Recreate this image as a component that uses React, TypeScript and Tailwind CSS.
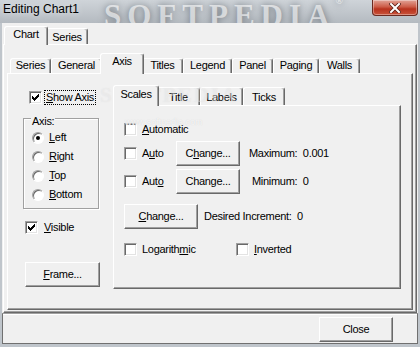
import type { ReactNode } from 'react';

const font = "font-['Liberation_Sans',Arial,sans-serif]";

function U({ children }: { children: ReactNode }) {
  return <span className="underline decoration-1 underline-offset-[1px]">{children}</span>;
}

function Check({ checked = false }: { checked?: boolean }) {
  const tops = [2, 3, 4, 3, 2, 1, 0];
  return (
    <span className="relative inline-block h-[13px] w-[13px] shrink-0 border border-t-[#a0a0a0] border-l-[#a0a0a0] border-r-white border-b-white bg-white shadow-[inset_1px_1px_0_#696969,inset_-1px_-1px_0_#e3e3e3]">
      {checked && (
        <svg className="absolute left-[2px] top-[2px]" width="7" height="7" viewBox="0 0 7 7" shapeRendering="crispEdges">
          {tops.map((t, i) => (
            <rect key={i} x={i} y={t} width="1" height="3" fill="#000" />
          ))}
        </svg>
      )}
    </span>
  );
}

function Radio({ on = false }: { on?: boolean }) {
  return (
    <span className="relative inline-block h-[12px] w-[12px] shrink-0 rounded-full border border-t-[#a0a0a0] border-l-[#a0a0a0] border-r-white border-b-white bg-white shadow-[inset_1px_1px_0_#696969]">
      {on && <span className="absolute left-[3px] top-[3px] h-[4px] w-[4px] rounded-full bg-black" />}
    </span>
  );
}

function Btn({ className, children }: { className: string; children: ReactNode }) {
  return (
    <div
      className={`flex h-[25px] shrink-0 items-center justify-center border border-t-white border-l-white border-r-[#696969] border-b-[#696969] bg-[#f0f0f0] shadow-[inset_-1px_-1px_0_#a0a0a0] ${className}`}
    >
      {children}
    </div>
  );
}

function Tab({ children, sel = false, className }: { children: ReactNode; sel?: boolean; className: string }) {
  return (
    <div
      className={`shrink-0 whitespace-nowrap rounded-t-[3px] border-t border-l border-r border-t-white border-l-white border-r-[#696969] bg-[#f0f0f0] text-center shadow-[inset_-1px_0_0_#a0a0a0] ${
        sel ? 'relative z-10 -mx-[2px] -mb-px' : ''
      } ${className}`}
    >
      {children}
    </div>
  );
}

const panel =
  'border border-t-white border-l-white border-r-[#696969] border-b-[#696969] shadow-[inset_-1px_-1px_0_#a0a0a0] bg-[#f0f0f0]';

function TitleBar() {
  return (
    <div className="relative h-[23px] overflow-hidden bg-[linear-gradient(#cfd4d9,#b4bac0)] tracking-normal">
      <div className="absolute left-[104px] top-[-7px] font-['Liberation_Serif',serif] text-[31px] font-bold tracking-[6px] text-white/60 [text-shadow:0_0_7px_#6f767d]">
        SOFTPEDIA<span className="align-top text-[10px]">®</span>
      </div>
      <div className="relative pl-[3px] pt-[2px] text-[12px] leading-[14px] text-black [text-shadow:0_0_6px_#e8ecf0]">
        Editing Chart1
      </div>
      <div className="absolute right-[2px] top-0 flex h-[16px] w-[46px] items-center justify-center rounded-b-[4px] border border-t-0 border-[#6b2a20] bg-[linear-gradient(#e2a497,#cd5d48_45%,#b8321d_60%,#c9543b)] shadow-[inset_0_0_0_1px_rgba(255,255,255,0.35)]">
        <svg width="12" height="10" viewBox="0 0 12 10">
          <path d="M2 1 L10 9 M10 1 L2 9" stroke="#5a2219" strokeWidth="3.6" strokeLinecap="square" />
          <path d="M2 1 L10 9 M10 1 L2 9" stroke="#fff" strokeWidth="2" strokeLinecap="square" />
        </svg>
      </div>
    </div>
  );
}

function LeftColumn() {
  const radios: [ReactNode, boolean][] = [
    [<><U>L</U>eft</>, true],
    [<><U>R</U>ight</>, false],
    [<><U>T</U>op</>, false],
    [<><U>B</U>ottom</>, false],
  ];
  return (
    <div className="mt-[15px] flex w-[78px] shrink-0 flex-col">
      <div className="flex h-[16px] items-center pl-[6px]">
        <Check checked />
        <span className="ml-[2px] whitespace-nowrap border border-dotted border-black px-[1px] leading-[13px]">
          <U>S</U>how Axis
        </span>
      </div>
      <div className="relative mt-[13px] h-[91px] w-[76px] border border-[#a0a0a0] pt-[9px] pl-[8px] shadow-[1px_1px_0_#fff,inset_1px_1px_0_#fff]">
        <span className="absolute left-[7px] top-[-4px] bg-[#f0f0f0] px-[1px] leading-[13px]">Axis:</span>
        {radios.map(([label, on], i) => (
          <div key={i} className="flex h-[19px] items-center">
            <Radio on={on} />
            <span className="ml-[5px] leading-[13px]">{label}</span>
          </div>
        ))}
      </div>
      <div className="mt-[12px] flex h-[13px] items-center pl-[2px]">
        <Check checked />
        <span className="ml-[6px] leading-[13px]">
          <U>V</U>isible
        </span>
      </div>
      <Btn className="ml-[2px] mt-[28px] w-[75px]">
        <U>F</U>rame...
      </Btn>
    </div>
  );
}

function ScalesPanel() {
  return (
    <div className="mt-[11px] flex w-[288px] shrink-0 flex-col">
      <div className="flex h-[20px] items-end pl-[2px]">
        <Tab sel className="h-[21px] w-[46px] pt-[2px] leading-[13px]">
          Scales
        </Tab>
        <Tab className="h-[18px] w-[43px] pt-[3px] leading-[13px]">Title</Tab>
        <Tab className="h-[18px] w-[43px] pt-[3px] leading-[13px]">Labels</Tab>
        <Tab className="h-[18px] w-[42px] pt-[3px] leading-[13px]">Ticks</Tab>
      </div>
      <div className={`${panel} h-[184px] pl-[10px]`}>
        <div className="mt-[17px] flex h-[13px] items-center">
          <Check />
          <span className="ml-[5px] leading-[13px]">
            <U>A</U>utomatic
          </span>
        </div>
        <div className="mt-[5px] flex h-[25px] items-center">
          <div className="flex w-[52px] items-center">
            <Check />
            <span className="ml-[5px] leading-[13px]">
              A<U>u</U>to
            </span>
          </div>
          <Btn className="w-[64px]">
            C<U>h</U>ange...
          </Btn>
          <span className="ml-[9px] whitespace-pre leading-[13px]">Maximum:  0.001</span>
        </div>
        <div className="mt-[3px] flex h-[25px] items-center">
          <div className="flex w-[52px] items-center">
            <Check />
            <span className="ml-[5px] leading-[13px]">
              Aut<U>o</U>
            </span>
          </div>
          <Btn className="w-[64px]">Change...</Btn>
          <span className="ml-[12px] whitespace-pre leading-[13px]">Minimum:  0</span>
        </div>
        <div className="mt-[10px] flex h-[25px] items-center">
          <Btn className="w-[74px]">
            <U>C</U>hange...
          </Btn>
          <span className="ml-[6px] whitespace-pre leading-[13px]">Desired Increment:  0</span>
        </div>
        <div className="mt-[14px] flex h-[13px] items-center">
          <div className="flex w-[112px] items-center">
            <Check />
            <span className="ml-[5px] leading-[13px]">
              Logarith<U>m</U>ic
            </span>
          </div>
          <Check />
          <span className="ml-[5px] leading-[13px]">
            <U>I</U>nverted
          </span>
        </div>
      </div>
    </div>
  );
}

export default function App() {
  const innerTabs: [string, string][] = [
    ['Series', 'w-[41px]'],
    ['General', 'w-[51px]'],
  ];
  const innerTabs2: [string, string][] = [
    ['Titles', 'w-[41px]'],
    ['Legend', 'w-[49px]'],
    ['Panel', 'w-[41px]'],
    ['Paging', 'w-[46px]'],
    ['Walls', 'w-[41px]'],
  ];
  return (
    <div className={`relative h-[347px] w-[420px] overflow-hidden bg-[#bfc5cb] text-[11px] tracking-[-0.3px] text-black ${font}`}>
      <TitleBar />
      <div className="mx-[2px] flex h-[321px] flex-col bg-[#f0f0f0] pt-[3px]">
        <div className="flex h-[18px] items-end pl-[4px]">
          <Tab sel className="h-[19px] w-[44px] pt-[1px] leading-[13px]">
            Chart
          </Tab>
          <Tab className="h-[16px] w-[42px] pt-[2px] leading-[13px]">Series</Tab>
        </div>
        <div className={`${panel} mx-[1px] h-[269px] px-[3px] pt-[8px]`}>
          <div className="flex h-[20px] items-end pl-[3px]">
            {innerTabs.map(([l, w]) => (
              <Tab key={l} className={`h-[15px] pt-[0px] leading-[13px] ${w}`}>
                {l}
              </Tab>
            ))}
            <Tab sel className="h-[21px] w-[44px] pt-[1px] leading-[13px]">
              Axis
            </Tab>
            {innerTabs2.map(([l, w]) => (
              <Tab key={l} className={`h-[15px] pt-[0px] leading-[13px] ${w}`}>
                {l}
              </Tab>
            ))}
          </div>
          <div className={`${panel} flex h-[237px] items-start gap-[12px] pl-[15px]`}>
            <LeftColumn />
            <ScalesPanel />
          </div>
        </div>
        <div className="flex h-[31px] justify-end border border-t-[#a0a0a0] border-l-[#707070] border-r-[#707070] border-b-[#707070] pr-[24px] pt-[3px] shadow-[inset_0_1px_0_#fff]">
          <Btn className="w-[74px]">Close</Btn>
        </div>
      </div>
      <div className="pointer-events-none absolute left-[100px] top-[80px] font-['Liberation_Serif',serif] text-[21px] font-bold tracking-[2px] text-white/25 [text-shadow:0_0_1px_rgba(200,200,200,0.35)]">
        SOFTPEDIA
      </div>
      <div className="pointer-events-none absolute left-[125px] top-[117px] text-[9px] leading-[11px] tracking-normal text-white/80 [text-shadow:0_0_1px_#c8c8c8]">
        www.softpedia.com
      </div>
    </div>
  );
}
